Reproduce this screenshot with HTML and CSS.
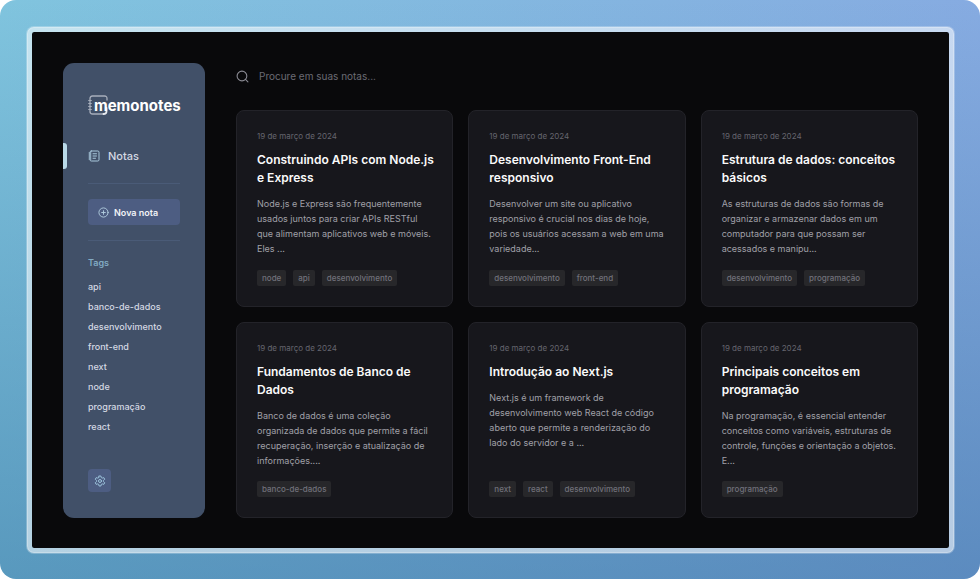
FILE: index.html
```html
<!DOCTYPE html>
<html lang="pt-BR">
<head>
<meta charset="utf-8">
<meta name="viewport" content="width=device-width, initial-scale=1">
<title>memonotes</title>
<link rel="stylesheet" href="styles.css">
</head>
<body>
<div class="backdrop">
<div class="window">
  <aside class="sidebar">
    <a class="logo" href="#">
      <svg class="logo-book" viewBox="0 0 20 20" fill="none" stroke="currentColor" stroke-linecap="round" aria-hidden="true">
        <path d="M19 5V3.500Q19 1 16.500 1H4.500Q2 1 2 3.500V16.500Q2 19 4.500 19H15.500" stroke-width="1.300"/>
        <path d="M.7 5.500H3.300M.7 8.500H3.300M.7 11.500H3.300M.7 14.500H3.300" stroke-width="1.200"/>
        <path d="M15.500 19Q18.500 19 18.500 16.500V13" stroke="#e8ebf0" stroke-width="1.800"/>
      </svg>
      <span class="logo-text">memonotes</span>
    </a>
    <nav class="nav">
      <a class="nav-link" href="#">
        <svg class="nav-icon" viewBox="0 0 24 24" fill="none" stroke="currentColor" stroke-width="2" stroke-linecap="round" stroke-linejoin="round" aria-hidden="true">
          <rect x="4" y="2" width="18" height="20" rx="2.500"/>
          <path d="M2 6h4M2 10h4M2 14h4M2 18h4M10 7.500h7M10 12h7M10 16.500h5"/>
        </svg>
        Notas
      </a>
    </nav>
    <div class="actions">
      <button class="new-note" type="button">
        <svg class="plus-icon" viewBox="0 0 24 24" fill="none" stroke="currentColor" stroke-width="2" stroke-linecap="round" aria-hidden="true">
          <circle cx="12" cy="12" r="10"/><path d="M8 12h8M12 8v8"/>
        </svg>
        Nova nota
      </button>
    </div>
    <h2 class="tags-title">Tags</h2>
    <ul class="tag-list">
      <li><a href="#">api</a></li>
      <li><a href="#">banco-de-dados</a></li>
      <li><a href="#">desenvolvimento</a></li>
      <li><a href="#">front-end</a></li>
      <li><a href="#">next</a></li>
      <li><a href="#">node</a></li>
      <li><a href="#">programação</a></li>
      <li><a href="#">react</a></li>
    </ul>
    <button class="settings" type="button" aria-label="Configurações">
      <svg viewBox="0 0 24 24" fill="none" stroke="currentColor" stroke-width="2" stroke-linecap="round" stroke-linejoin="round" aria-hidden="true">
        <path d="M10.200 2h3.600l.8 3.200 1.800 1 3.200-.9 1.800 3.100-2.400 2.400v2.400l2.400 2.400-1.800 3.100-3.200-.9-1.800 1-.8 3.200h-3.600l-.8-3.200-1.800-1-3.200.9-1.800-3.100 2.400-2.400v-2.400L2.600 8.400l1.800-3.100 3.200.9 1.800-1z"/>
        <circle cx="12" cy="12" r="3"/>
      </svg>
    </button>
  </aside>
  <main class="main">
    <form class="search" role="search">
      <label for="search">
        <svg class="search-icon" viewBox="0 0 24 24" fill="none" stroke="currentColor" stroke-width="2" stroke-linecap="round" aria-hidden="true">
          <circle cx="11" cy="11" r="9"/><path d="M17.500 17.500 22 22"/>
        </svg>
      </label>
      <input id="search" type="search" placeholder="Procure em suas notas..." aria-label="Procure em suas notas">
    </form>
    <div class="grid">
      <article class="card">
        <time datetime="2024-03-19">19 de março de 2024</time>
        <h3>Construindo APIs com Node.js e Express</h3>
        <p>Node.js e Express são frequentemente usados juntos para criar APIs RESTful que alimentam aplicativos web e móveis. Eles ...</p>
        <div class="chips"><span>node</span><span>api</span><span>desenvolvimento</span></div>
      </article>
      <article class="card">
        <time datetime="2024-03-19">19 de março de 2024</time>
        <h3>Desenvolvimento Front-End responsivo</h3>
        <p>Desenvolver um site ou aplicativo responsivo é crucial nos dias de hoje, pois os usuários acessam a web em uma variedade...</p>
        <div class="chips"><span>desenvolvimento</span><span>front-end</span></div>
      </article>
      <article class="card">
        <time datetime="2024-03-19">19 de março de 2024</time>
        <h3>Estrutura de dados: conceitos básicos</h3>
        <p>As estruturas de dados são formas de organizar e armazenar dados em um computador para que possam ser acessados e manipu...</p>
        <div class="chips"><span>desenvolvimento</span><span>programação</span></div>
      </article>
      <article class="card">
        <time datetime="2024-03-19">19 de março de 2024</time>
        <h3>Fundamentos de Banco de Dados</h3>
        <p>Banco de dados é uma coleção organizada de dados que permite a fácil recuperação, inserção e atualização de informações....</p>
        <div class="chips"><span>banco-de-dados</span></div>
      </article>
      <article class="card">
        <time datetime="2024-03-19">19 de março de 2024</time>
        <h3>Introdução ao Next.js</h3>
        <p>Next.js é um framework de desenvolvimento web React de código aberto que permite a renderização do lado do servidor e a ...</p>
        <div class="chips"><span>next</span><span>react</span><span>desenvolvimento</span></div>
      </article>
      <article class="card">
        <time datetime="2024-03-19">19 de março de 2024</time>
        <h3>Principais conceitos em programação</h3>
        <p>Na programação, é essencial entender conceitos como variáveis, estruturas de controle, funções e orientação a objetos. E...</p>
        <div class="chips"><span>programação</span></div>
      </article>
    </div>
  </main>
</div>
</div>
</body>
</html>
```
FILE: styles.css
```css
* {
  box-sizing: border-box;
}

body {
  margin: 0;
  background: #fff;
  font-family: Inter, "Liberation Sans", sans-serif;
}

a {
  color: inherit;
  text-decoration: none;
}

button {
  border: 0;
  padding: 0;
  font: inherit;
  cursor: pointer;
}

h2,
h3,
p,
ul {
  margin: 0;
  padding: 0;
}

svg {
  display: block;
}

.backdrop {
  display: flex;
  min-height: 100vh;
  padding: 27px 26px 26px 27px;
  border-radius: 16px;
  background:
    linear-gradient(to bottom, transparent, rgba(40, 100, 150, 0.45)),
    linear-gradient(to right, #80c4de, #86abe1);
}

.window {
  display: flex;
  flex: 1;
  gap: 31px;
  padding: 31px 31px 30px;
  border: 5px solid rgba(255, 255, 255, 0.55);
  border-radius: 7px;
  background: #09090b;
  background-clip: padding-box;
  box-shadow: 0 0 0 1px rgba(255, 255, 255, 0.25);
}

.sidebar {
  display: flex;
  flex-direction: column;
  width: 142px;
  padding: 32px 25px 26px;
  border-radius: 11px;
  background: #415068;
  color: #d4d9e3;
}

.logo {
  display: flex;
  position: relative;
  height: 20px;
  padding-left: 6px;
  color: #fff;
}

.logo-book {
  position: absolute;
  left: 0;
  top: 0;
  width: 20px;
  height: 20px;
  color: #a6adba;
}

.logo-text {
  position: relative;
  font-size: 15px;
  font-weight: 700;
  line-height: 22px;
}

.nav {
  margin: 28px 0 0 -25px;
}

.nav-link {
  display: flex;
  align-items: center;
  gap: 8px;
  height: 26px;
  font-size: 11px;
  font-weight: 500;
}

.nav-link::before {
  content: "";
  width: 4px;
  height: 26px;
  margin-right: 13px;
  border-radius: 0 3px 3px 0;
  background: #b9d9e8;
}

.nav-icon {
  width: 12px;
  height: 12px;
  color: #a9c8dc;
}

.actions {
  margin-top: 14px;
  padding: 15px 0;
  border-top: 1px solid #4a5b77;
  border-bottom: 1px solid #4a5b77;
}

.new-note {
  display: flex;
  align-items: center;
  gap: 5px;
  width: 100%;
  height: 26px;
  padding-left: 10px;
  border-radius: 4px;
  background: #4d5d82;
  color: #f0f2f6;
  font-size: 9px;
  font-weight: 600;
}

.plus-icon {
  width: 11px;
  height: 11px;
  color: #b4cfe0;
}

.tags-title {
  margin-top: 14px;
  color: #82abc4;
  font-size: 9px;
  font-weight: 600;
  line-height: 16px;
}

.tag-list {
  display: grid;
  gap: 4px;
  margin-top: 8px;
  list-style: none;
  font-size: 9px;
  font-weight: 500;
  line-height: 16px;
}

.settings {
  display: grid;
  place-items: center;
  width: 23px;
  height: 23px;
  margin-top: auto;
  border-radius: 4px;
  background: #4d5d82;
  color: #9cc3dc;
}

.settings svg {
  width: 12px;
  height: 12px;
}

.main {
  display: flex;
  flex: 1;
  flex-direction: column;
  gap: 21px;
  min-width: 0;
}

.search {
  display: flex;
  align-items: center;
  gap: 10px;
  height: 26px;
  color: #8b8b94;
}

.search-icon {
  width: 13px;
  height: 13px;
}

.search input {
  flex: 1;
  min-width: 0;
  padding: 0;
  border: 0;
  outline: 0;
  background: transparent;
  color: #e4e4e7;
  font: 10px/16px Inter, "Liberation Sans", sans-serif;
}

.search input::placeholder {
  color: #6b6b74;
  opacity: 1;
}

.grid {
  display: grid;
  flex: 1;
  grid-template-columns: repeat(3, minmax(0, 1fr));
  grid-auto-rows: 1fr;
  gap: 15px;
}

.card {
  display: flex;
  flex-direction: column;
  padding: 19px 16px 20px 20px;
  border: 1px solid #232329;
  border-radius: 8px;
  background: #17171c;
}

.card time {
  color: #65656e;
  font-size: 8px;
  line-height: 12px;
}

.card h3 {
  margin-top: 9px;
  color: #fafafa;
  font-size: 12px;
  font-weight: 600;
  line-height: 18px;
}

.card p {
  margin-top: 9px;
  padding-right: 4px;
  color: #a0a0a8;
  font-size: 9px;
  line-height: 15px;
}

.chips {
  display: flex;
  gap: 7px;
  margin-top: auto;
}

.chips span {
  padding: 0 5px;
  border-radius: 2px;
  background: #27272a;
  color: #71717a;
  font-size: 8px;
  font-weight: 500;
  line-height: 16px;
}
```
